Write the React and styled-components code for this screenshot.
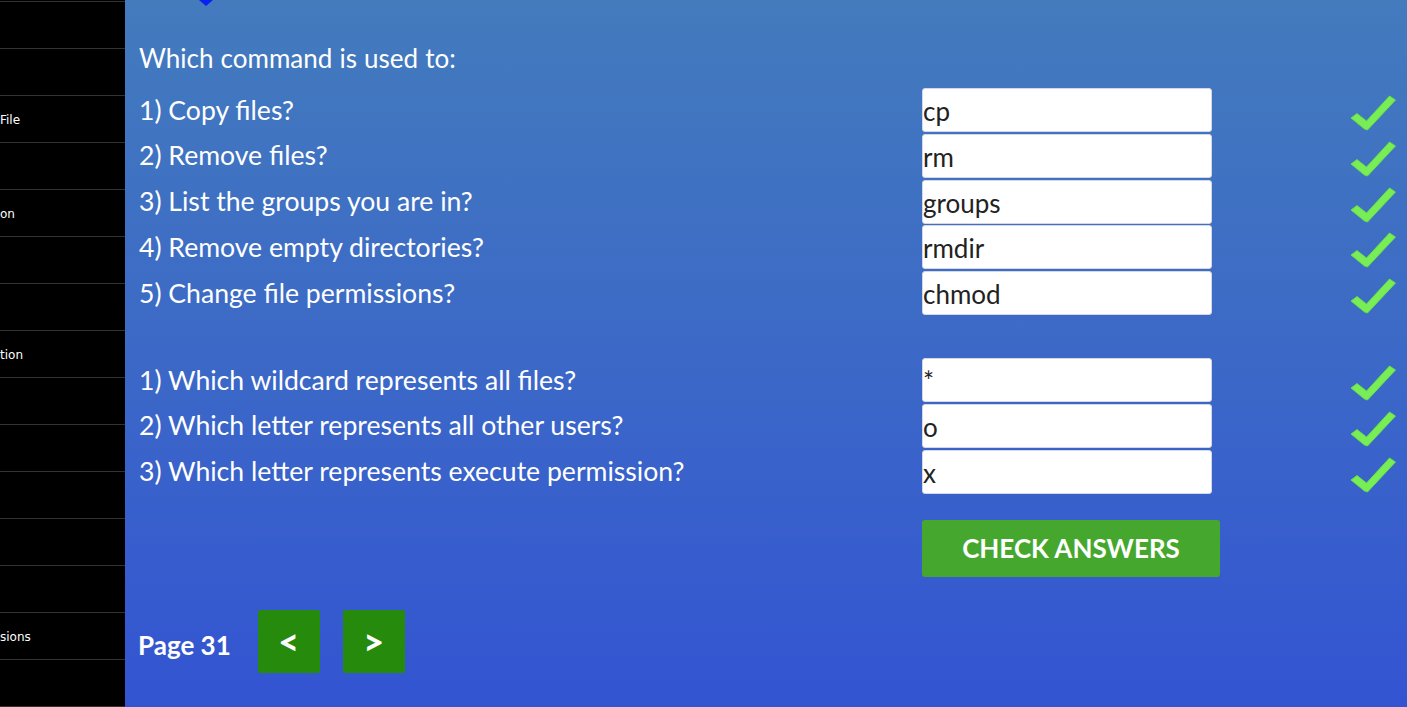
import React from 'react';
import styled, { createGlobalStyle } from 'styled-components';

const GlobalStyle = createGlobalStyle`
  html, body {
    margin: 0;
    padding: 0;
    height: 100%;
    overflow: hidden;
  }
  #root {
    height: 100%;
  }
`;

const Layout = styled.div`
  display: flex;
  height: 100vh;
  font-family: Lato, "Open Sans", sans-serif;
`;

const Sidebar = styled.nav`
  width: 125px;
  flex-shrink: 0;
  background: #000;
  padding-top: 1px;
  overflow: hidden;
`;

const NavList = styled.ul`
  list-style: none;
  margin: 0;
  padding: 0;
  border-top: 1px solid #333;
`;

const NavItem = styled.li`
  box-sizing: border-box;
  height: 47px;
  padding-top: 1px;
  border-bottom: 1px solid #333;
  display: flex;
  align-items: center;
  color: #fff;
  font-family: "DejaVu Sans", Tahoma, sans-serif;
  font-size: 12px;
  white-space: nowrap;
`;

const Main = styled.main`
  flex: 1;
  background: linear-gradient(180deg, #437bbd 0%, #3b67c8 55%, #3354d2 100%);
  color: #fff;
  padding: 0 10px 0 14px;
`;

const TopStrip = styled.div`
  height: 6px;
  padding-left: 60px;
`;

const Caret = styled.div`
  width: 0;
  height: 0;
  border-left: 7px solid transparent;
  border-right: 7px solid transparent;
  border-top: 6px solid #0a1ff2;
`;

const Heading = styled.h2`
  margin: 37px 0 14px;
  font-size: 26px;
  font-weight: 400;
  line-height: 31px;
  word-spacing: 0.5px;
`;

const QuizGrid = styled.div`
  display: grid;
  grid-template-columns: 783px 290px 1fr;
  grid-template-rows: repeat(5, 44px) 39.5px repeat(3, 44px);
  row-gap: 1.75px;
`;

const Question = styled.label`
  display: flex;
  align-items: center;
  font-size: 26.6px;
  line-height: 31px;
`;

const Answer = styled.input`
  box-sizing: border-box;
  width: 100%;
  height: 44px;
  margin: 0;
  padding: 2px 0 0;
  border: 1px solid #d4d8e4;
  border-radius: 3px;
  background: #fff;
  color: #222;
  font-family: Lato, "Open Sans", sans-serif;
  font-size: 26px;
  outline: none;
`;

const CheckCell = styled.div`
  display: flex;
  align-items: center;
  justify-content: flex-end;
  padding-top: 6px;
`;

const Spacer = styled.div`
  grid-column: 1 / -1;
`;

const ButtonRow = styled.div`
  padding-left: 783px;
  margin-top: 26px;
`;

const CheckButton = styled.button`
  width: 298px;
  height: 57px;
  border: none;
  border-radius: 3px;
  background: #45a72d;
  color: #fff;
  font-family: Lato, "Open Sans", sans-serif;
  font-size: 26px;
  font-weight: 700;
  text-transform: uppercase;
  cursor: pointer;
`;

const Pager = styled.div`
  display: flex;
  align-items: center;
  gap: 23px;
  margin-top: 33px;
  margin-left: -1px;
`;

const PageLabel = styled.span`
  font-size: 26px;
  font-weight: 700;
  margin-right: 4px;
  padding-top: 8px;
`;

const PageButton = styled.button`
  width: 62px;
  height: 63px;
  padding: 0;
  border: none;
  border-radius: 2px;
  background: #268a0c;
  color: #fff;
  font-family: Lato, "Open Sans", sans-serif;
  font-size: 36px;
  font-weight: 900;
  line-height: 1;
  cursor: pointer;
`;

const Tick = () => (
  <svg width="47" height="38" viewBox="0 0 47 38">
    <path
      d="M1 24 L7 19.5 L16.5 27 L39.5 2 L45.5 6 L17.5 36 L14.5 35 Z"
      fill="#77ee55"
      stroke="#6ad84c"
      strokeWidth="1"
      strokeLinejoin="round"
    />
  </svg>
);

const navItems = ['', '', 'File', '', 'on', '', '', 'tion', '', '', '', '', '', 'sions', ''];

const firstSet = [
  ['1) Copy files?', 'cp'],
  ['2) Remove files?', 'rm'],
  ['3) List the groups you are in?', 'groups'],
  ['4) Remove empty directories?', 'rmdir'],
  ['5) Change file permissions?', 'chmod'],
];

const secondSet = [
  ['1) Which wildcard represents all files?', '*'],
  ['2) Which letter represents all other users?', 'o'],
  ['3) Which letter represents execute permission?', 'x'],
];

function QuestionRow({ text, answer }) {
  return (
    <>
      <Question>{text}</Question>
      <Answer defaultValue={answer} />
      <CheckCell>
        <Tick />
      </CheckCell>
    </>
  );
}

export default function App() {
  return (
    <>
      <GlobalStyle />
      <Layout>
        <Sidebar>
          <NavList>
            {navItems.map((label, i) => (
              <NavItem key={i}>{label}</NavItem>
            ))}
          </NavList>
        </Sidebar>
        <Main>
          <TopStrip>
            <Caret />
          </TopStrip>
          <Heading>Which command is used to:</Heading>
          <QuizGrid>
            {firstSet.map(([q, a]) => (
              <QuestionRow key={q} text={q} answer={a} />
            ))}
            <Spacer />
            {secondSet.map(([q, a]) => (
              <QuestionRow key={q} text={q} answer={a} />
            ))}
          </QuizGrid>
          <ButtonRow>
            <CheckButton>Check Answers</CheckButton>
          </ButtonRow>
          <Pager>
            <PageLabel>Page 31</PageLabel>
            <PageButton>&lt;</PageButton>
            <PageButton>&gt;</PageButton>
          </Pager>
        </Main>
      </Layout>
    </>
  );
}
